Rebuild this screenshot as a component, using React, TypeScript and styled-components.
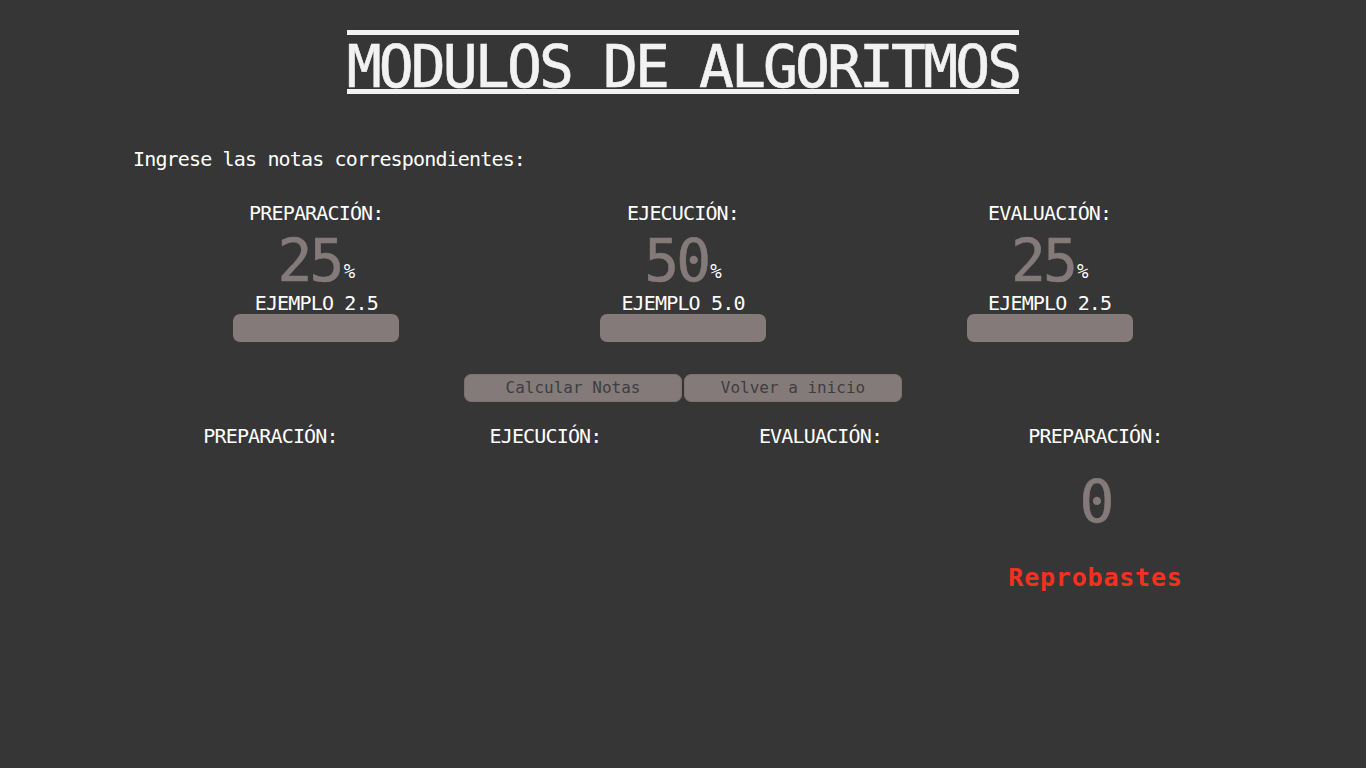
import React from "react";
import styled, { createGlobalStyle } from "styled-components";

const Global = createGlobalStyle`
  html, body {
    margin: 0;
    padding: 0;
    background: #363636;
  }
  body {
    font-family: "DejaVu Sans Mono", "Liberation Mono", monospace;
    color: #ffffff;
  }
`;

const Page = styled.div`
  min-height: 768px;
  padding-top: 30px;
  background: #363636;
`;

const Header = styled.header`
  display: flex;
  justify-content: center;
`;

const Title = styled.h1`
  margin: 0;
  display: inline-block;
  border-top: 5px solid #f2f2f2;
  border-bottom: 5px solid #f2f2f2;
  padding-top: 10px;
  font-size: 58px;
  line-height: 44px;
  font-weight: normal;
  letter-spacing: -2.9px;
  color: #f2f2f2;
  white-space: pre;
  -webkit-text-stroke: 0.6px #f2f2f2;
`;

const Container = styled.main`
  width: 1100px;
  margin: 0 auto;
`;

const Intro = styled.p`
  margin: 53px 0 0;
  font-size: 20px;
  line-height: 24px;
  letter-spacing: -0.84px;
`;

const Grid = styled.div<{ $cols: number; $top: number }>`
  display: grid;
  grid-template-columns: repeat(${(p) => p.$cols}, 1fr);
  margin-top: ${(p) => p.$top}px;
`;

const Column = styled.div`
  display: flex;
  flex-direction: column;
  align-items: center;
`;

const Label = styled.div`
  font-size: 20px;
  line-height: 24px;
  letter-spacing: -0.84px;
  white-space: pre;
`;

const BigNumber = styled.div<{ $top: number }>`
  margin-top: ${(p) => p.$top}px;
  font-size: 58px;
  line-height: 50px;
  letter-spacing: -2.9px;
  color: #857a7a;
  white-space: pre;
  -webkit-text-stroke: 0.6px #857a7a;
`;

const Percent = styled.span`
  font-size: 19px;
  line-height: 0;
  letter-spacing: 0;
  color: #ffffff;
  -webkit-text-stroke: 0;
  vertical-align: 3px;
  margin-left: 2px;
`;

const Example = styled.div`
  margin-top: 6px;
  font-size: 20px;
  line-height: 22px;
  letter-spacing: -0.84px;
`;

const Input = styled.input`
  display: block;
  width: 166px;
  height: 28px;
  box-sizing: border-box;
  border: none;
  border-radius: 7px;
  background: #857a7a;
  outline: none;
`;

const Actions = styled.div`
  display: flex;
  justify-content: center;
  gap: 2px;
  margin-top: 32px;
`;

const Button = styled.button`
  width: 218px;
  height: 28px;
  box-sizing: border-box;
  border: 1px solid #7a7070;
  border-radius: 7px;
  background: #857a7a;
  color: #3e3e3e;
  font-family: "DejaVu Sans Mono", "Liberation Mono", monospace;
  font-size: 16px;
  line-height: 26px;
  padding: 0;
  cursor: pointer;
`;

const Result = styled.div<{ $pass: boolean }>`
  margin-top: 36px;
  font-size: 25px;
  line-height: 30px;
  font-weight: bold;
  letter-spacing: 0.8px;
  color: ${(p) => (p.$pass ? "#3fd15a" : "#f5301f")};
`;

const inputs = [
  { label: "PREPARACIÓN:", pct: "25", example: "EJEMPLO 2.5" },
  { label: "EJECUCIÓN:", pct: "50", example: "EJEMPLO 5.0" },
  { label: "EVALUACIÓN:", pct: "25", example: "EJEMPLO 2.5" },
];

export default function App() {
  return (
    <Page>
      <Global />
      <Header>
        <Title>MODULOS DE ALGORITMOS</Title>
      </Header>
      <Container>
        <Intro>Ingrese las notas correspondientes:</Intro>
        <Grid $cols={3} $top={30}>
          {inputs.map((it, i) => (
            <Column key={i}>
              <Label>{it.label}</Label>
              <BigNumber $top={11}>
                {it.pct}
                <Percent>%</Percent>
              </BigNumber>
              <Example>{it.example}</Example>
              <Input type="text" />
            </Column>
          ))}
        </Grid>
        <Actions>
          <Button>Calcular Notas</Button>
          <Button>Volver a inicio</Button>
        </Actions>
        <Grid $cols={4} $top={22}>
          <Column>
            <Label>PREPARACIÓN:</Label>
          </Column>
          <Column>
            <Label>EJECUCIÓN:</Label>
          </Column>
          <Column>
            <Label>EVALUACIÓN:</Label>
          </Column>
          <Column>
            <Label>PREPARACIÓN:</Label>
            <BigNumber $top={29}>0</BigNumber>
            <Result $pass={false}>Reprobastes</Result>
          </Column>
        </Grid>
      </Container>
    </Page>
  );
}
